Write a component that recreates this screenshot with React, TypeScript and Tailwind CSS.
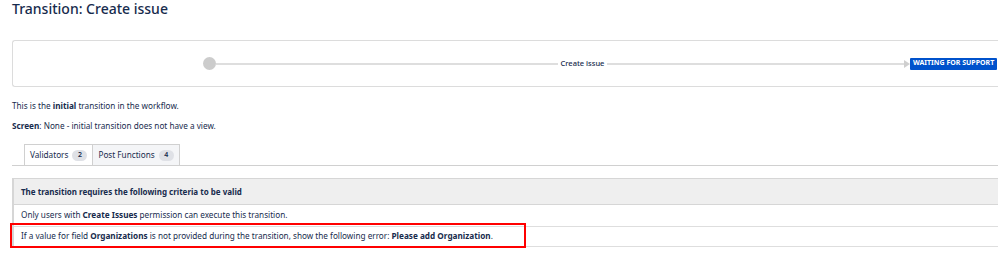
export default function App() {
  const font = { fontFamily: '"Noto Sans", "Open Sans", sans-serif' };
  return (
    <div className="relative w-[998px] h-[260px] overflow-hidden bg-white text-[#172b4d]" style={font}>
      <div className="pl-3">
        <h1 className="text-[14px] leading-[18px] font-medium h-[40px]">Transition: Create issue</h1>

        {/* workflow diagram */}
        <div className="w-[1000px] h-[47px] border border-r-0 border-[#dcdcdc] rounded-l-[3px] flex items-center pl-[190px]">
          <div className="w-[13px] h-[13px] rounded-full bg-[#cccccc] shrink-0" />
          <div className="w-[342px] h-[2px] bg-[#dedede] shrink-0" />
          <div className="w-[49px] text-center text-[7.5px] font-medium text-[#172b4d] shrink-0">Create issue</div>
          <div className="w-[297px] h-[2px] bg-[#dedede] shrink-0" />
          <div className="w-0 h-0 border-y-[4px] border-y-transparent border-l-[6px] border-l-[#cfcfcf] shrink-0" />
          <div className="h-[12px] px-[3px] flex items-center bg-[#0052cc] text-white text-[7px] font-bold rounded-[1px] shrink-0 whitespace-nowrap">WAITING FOR SUPPORT</div>
        </div>

        <p className="text-[8.2px] leading-[12px] mt-[13px]">This is the <span className="font-bold">initial</span> transition in the workflow.</p>
        <p className="text-[8.2px] leading-[12px] mt-[8px]"><span className="font-bold">Screen</span>: None - initial transition does not have a view.</p>

        {/* tabs */}
        <div className="mt-[12px] border-b border-[#d0d0d0] flex pl-3 text-[8.2px]">
          <div className="h-[21px] -mb-px flex items-center gap-[4px] px-[5px] bg-white border border-b-0 border-[#d0d0d0]">
            <span>Validators</span>
            <span className="h-[11px] min-w-[15px] px-[4px] rounded-full bg-[#dfe1e6] text-[7px] font-semibold flex items-center justify-center">2</span>
          </div>
          <div className="h-[21px] flex items-center gap-[4px] px-[5px] bg-[#f4f5f7] border border-l-0 border-b-0 border-[#d0d0d0]">
            <span>Post Functions</span>
            <span className="h-[11px] min-w-[15px] px-[4px] rounded-full bg-[#dfe1e6] text-[7px] font-semibold flex items-center justify-center">4</span>
          </div>
        </div>

        {/* table */}
        <div className="mt-[12px] w-[1000px] border-t border-l-2 border-[#d6d6d6] text-[8.2px]">
          <div className="h-[26px] bg-[#efefef] border-b border-[#d6d6d6] flex items-center pl-[7px] font-bold text-[8px]">
            The transition requires the following criteria to be valid
          </div>
          <div className="h-[22px] border-b border-[#dedede] flex items-center pl-[7px]">
            <span>Only users with <span className="font-bold">Create Issues</span> permission can execute this transition.</span>
          </div>
          <div className="h-[20px] border-b border-[#dedede] flex items-center pl-[7px]">
            <span>If a value for field <span className="font-bold">Organizations</span> is not provided during the transition, show the following error: <span className="font-bold">Please add Organization</span>.</span>
          </div>
        </div>
      </div>

      {/* red annotation box */}
      <div className="absolute left-[10px] top-[223px] w-[516px] h-[25px] border-2 border-[#ff0000]" />
    </div>
  );
}
